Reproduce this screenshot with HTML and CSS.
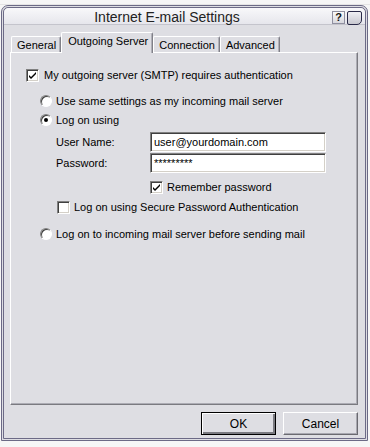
FILE: index.html
```html
<!DOCTYPE html>
<html lang="en">
<head>
    <meta charset="UTF-8">
    <title>Internet E-mail Settings</title>
    <link rel="stylesheet" href="styles.css">
</head>
<body>
    <div class="backdrop"></div>

    <div class="dialog">
        <div class="titlebar">
            <div class="title">Internet E-mail Settings</div>
            <div class="tbtn help">?</div>
            <div class="tbtn close"></div>
        </div>

        <div class="client">
            <div class="tabs">
                <div class="tab">General</div>
                <div class="tab active">Outgoing Server</div>
                <div class="tab">Connection</div>
                <div class="tab">Advanced</div>
            </div>

            <div class="panel">
                <div class="row first">
                    <span class="check on"><svg viewBox="0 0 7 7" width="7" height="7"><path d="M0 3 L2 5 L7 0 L7 2 L2 7 L0 5 Z" fill="#000"/></svg></span>
                    <span>My outgoing server (SMTP) requires authentication</span>
                </div>
                <div class="row radio-row r1">
                    <span class="radio"></span>
                    <span>Use same settings as my incoming mail server</span>
                </div>
                <div class="row radio-row r2">
                    <span class="radio on"></span>
                    <span>Log on using</span>
                </div>
                <div class="field f1">
                    <label>User Name:</label>
                    <div class="input">user@yourdomain.com</div>
                </div>
                <div class="field f2">
                    <label>Password:</label>
                    <div class="input">*********</div>
                </div>
                <div class="row remember">
                    <span class="check on"><svg viewBox="0 0 7 7" width="7" height="7"><path d="M0 3 L2 5 L7 0 L7 2 L2 7 L0 5 Z" fill="#000"/></svg></span>
                    <span>Remember password</span>
                </div>
                <div class="row spa">
                    <span class="check"></span>
                    <span>Log on using Secure Password Authentication</span>
                </div>
                <div class="row radio-row r3">
                    <span class="radio"></span>
                    <span>Log on to incoming mail server before sending mail</span>
                </div>
            </div>

            <div class="buttons">
                <button class="btn default">OK</button>
                <button class="btn">Cancel</button>
            </div>
        </div>
    </div>
</body>
</html>
```

FILE: styles.css
```css
body {
    margin: 0;
    width: 370px;
    height: 447px;
    overflow: hidden;
    background-color: #f6f6f6;
    font-family: "Liberation Sans", Arial, sans-serif;
    font-size: 11px;
    color: #000;
}
.backdrop {
    height: 5px;
    border-bottom: 1px solid #e4e4e4;
    box-sizing: border-box;
}
.dialog {
    margin-left: 1px;
    width: 367px;
    height: 436px;
    box-sizing: border-box;
    border: 3px double #6c6a86;
    border-radius: 7px 7px 0 0;
    background-color: #dedee3;
    display: flex;
    flex-direction: column;
}
.titlebar {
    height: 16px;
    display: flex;
    align-items: center;
    padding: 0 3px 0 0;
    background: linear-gradient(#f8f8fa, #e6e6ec);
    border-radius: 5px 5px 0 0;
    border-bottom: 1px solid #c4c4cc;
}
.title {
    flex: 1;
    text-align: center;
    font-size: 14px;
    color: #222;
    padding-top: 1px;
}
.tbtn {
    width: 13px;
    height: 13px;
    box-sizing: border-box;
    margin-left: 2px;
    margin-top: 3px;
}
.help {
    border: 1px solid #9090a0;
    background: linear-gradient(#fafafa, #d8d8de);
    font-weight: bold;
    font-size: 11px;
    line-height: 11px;
    text-align: center;
    color: #111;
}
.close {
    width: 15px;
    height: 14px;
    border: 1px solid #2a2a48;
    border-radius: 2px 2px 5px 2px;
    background: linear-gradient(#f0f0f4, #c8c8d0);
}
.client {
    flex: 1;
    padding: 7px 7px 0 6px;
}
.tabs {
    display: flex;
    align-items: flex-end;
    height: 20px;
    padding-left: 1px;
    position: relative;
    z-index: 1;
}
.tab {
    height: 16px;
    box-sizing: border-box;
    padding: 2px 4px 0 5px;
    border: 1px solid #fff;
    border-right: 1px solid #808088;
    border-bottom: none;
    border-radius: 2px 2px 0 0;
    box-shadow: inset -1px 0 #b0b0b8;
    background-color: #dedee3;
    white-space: nowrap;
}
.tab.active {
    height: 21px;
    margin-bottom: -1px;
    padding: 2px 4px 0 6px;
}
.panel {
    height: 353px;
    box-sizing: border-box;
    width: 348px;
    border: 1px solid;
    border-color: #fff #7a7a80 #7a7a80 #fff;
    box-shadow: inset -1px -1px #acacb4;
    padding-top: 14px;
}
.row {
    display: flex;
    align-items: center;
    height: 16px;
    white-space: nowrap;
}
.row.first {
    padding-left: 15px;
}
.row.first .check {
    margin-right: 5px;
}
.radio-row {
    padding-left: 29px;
}
.r1 {
    margin-top: 10px;
}
.r2 {
    margin-top: 3px;
}
.r3 {
    margin-top: 11px;
}
.check {
    width: 13px;
    height: 13px;
    box-sizing: border-box;
    border: 1px solid;
    border-color: #808080 #fff #fff #808080;
    box-shadow: inset 1px 1px #404040, inset -1px -1px #d4d0c8;
    background-color: #fff;
    margin-right: 4px;
    display: flex;
    align-items: center;
    justify-content: center;
}
.radio {
    width: 12px;
    height: 12px;
    box-sizing: border-box;
    border-radius: 50%;
    border: 1px solid;
    border-color: #808080 #fff #fff #808080;
    box-shadow: inset 1px 1px #404040;
    background-color: #fff;
    margin-right: 4px;
    position: relative;
}
.radio.on::after {
    content: "";
    position: absolute;
    left: 3px;
    top: 3px;
    width: 4px;
    height: 4px;
    border-radius: 50%;
    background-color: #000;
}
.field {
    display: flex;
    align-items: center;
    height: 20px;
    padding-left: 45px;
}
.f1 {
    margin-top: 4px;
}
.f2 {
    margin-top: 1px;
}
.field label {
    width: 94px;
}
.input {
    width: 176px;
    height: 20px;
    box-sizing: border-box;
    border: 1px solid;
    border-color: #808080 #fff #fff #808080;
    box-shadow: inset 1px 1px #404040, inset -1px -1px #d4d0c8;
    background-color: #fff;
    padding: 3px 0 0 3px;
    font-size: 11px;
}
.remember {
    margin-top: 6px;
    padding-left: 139px;
}
.spa {
    margin-top: 4px;
    padding-left: 46px;
}
.buttons {
    display: flex;
    justify-content: flex-end;
    gap: 7px;
    margin-top: 7px;
    width: 348px;
}
.btn {
    width: 75px;
    height: 23px;
    font-family: "Liberation Sans", Arial, sans-serif;
    font-size: 12px;
    color: #000;
    background-color: #dedee3;
    border: 1px solid;
    border-color: #fff #6a6a70 #6a6a70 #fff;
    box-shadow: inset -1px -1px #a8a8b0;
    padding: 0;
}
.btn.default {
    border: 1px solid #000;
    box-shadow: inset 1px 1px #fff, inset -2px -2px #7a7a80;
}
```
